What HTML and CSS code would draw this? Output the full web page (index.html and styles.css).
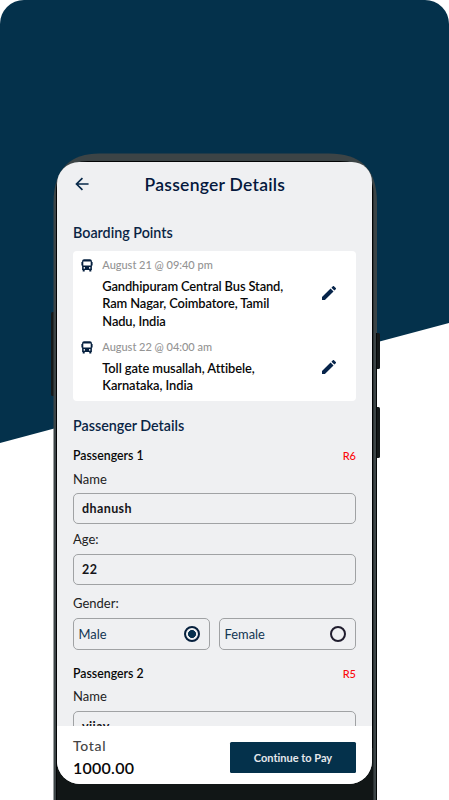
FILE: index.html
```html
<!DOCTYPE html>
<html lang="en">
<head>
<meta charset="utf-8">
<title>Passenger Details</title>
<link rel="stylesheet" href="styles.css">
</head>
<body>
<svg width="0" height="0" class="symbols" aria-hidden="true">
  <symbol id="bus" viewBox="0 0 12 13"><path fill="#06203f" fill-rule="evenodd" d="M3 .3H9Q10.700.300 10.900 2V3H11.600V6.500H10.900V11H10.300V12.500H8.300V11H3.700V12.500H1.700V11H1.100V6.500H.4V3H1.100V2Q1.300.3 3 .3ZM2.300 2.500V6.500H9.700V2.500ZM3.300 8.100A.8.8 0 1 0 3.300 9.700.8.8 0 1 0 3.300 8.100ZM8.700 8.100A.8.8 0 1 0 8.700 9.700.8.8 0 1 0 8.700 8.100Z"/></symbol>
  <symbol id="pencil" viewBox="3 3 18 18"><path fill="#06244a" d="M3 17.250V21h3.750L17.810 9.940l-3.750-3.750L3 17.250zM20.710 7.040a1 1 0 0 0 0-1.410l-2.340-2.340a1 1 0 0 0-1.410 0l-1.830 1.830 3.750 3.750 1.830-1.830z"/></symbol>
</svg>
<div class="poster">
  <svg class="backdrop" viewBox="0 0 449 800" aria-hidden="true"><path d="M0 24A24 24 0 0 1 24 0H425A24 24 0 0 1 449 24V323L0 443Z" fill="#04314b"/></svg>
  <i class="key key-left"></i><i class="key key-power"></i><i class="key key-volume"></i>
  <div class="phone">
    <svg class="shell" viewBox="0 0 324 647" aria-hidden="true">
      <path d="M-.5 647V50C-.5 14 18 .5 45 .5H275C305 .5 323 14 323 50V647Z" fill="#3c4446"/>
      <path d="M322.500 180V647" stroke="#050808"/>
      <path d="M2 647V38C2 20 16 8 34 8H286C306 8 319.300 20 319.300 39V647Z" fill="#020405"/>
      <path d="M3 595H319V647H3Z" fill="#111616"/>
    </svg>
    <main class="screen">
      <header class="topbar">
        <svg class="back" viewBox="0 0 16 16"><path d="M15.500 8H2M8.500 1.200 1.700 8 8.500 14.800" fill="none" stroke="#08294a" stroke-width="1.900"/></svg>
        <h1>Passenger Details</h1>
      </header>
      <div class="content">
        <h2>Boarding Points</h2>
        <section class="card">
          <div class="stop first">
            <svg class="bus"><use href="#bus"/></svg>
            <div class="where"><time>August 21 @ 09:40 pm</time><p>Gandhipuram Central Bus Stand,<br>Ram Nagar, Coimbatore, Tamil<br>Nadu, India</p></div>
            <svg class="edit"><use href="#pencil"/></svg>
          </div>
          <div class="stop">
            <svg class="bus"><use href="#bus"/></svg>
            <div class="where"><time>August 22 @ 04:00 am</time><p class="wide">Toll gate musallah, Attibele,<br>Karnataka, India</p></div>
            <svg class="edit"><use href="#pencil"/></svg>
          </div>
        </section>
        <h2 class="h-pass">Passenger Details</h2>
        <section class="passenger">
          <div class="who"><h3>Passengers 1</h3><span class="seat">R6</span></div>
          <div class="label">Name</div><div class="field">dhanush</div>
          <div class="label age">Age:</div><div class="field">22</div>
          <div class="label gender">Gender:</div>
          <div class="choices">
            <div class="choice">Male<i class="radio on"></i></div>
            <div class="choice">Female<i class="radio"></i></div>
          </div>
        </section>
        <section class="passenger">
          <div class="who"><h3>Passengers 2</h3><span class="seat">R5</span></div>
          <div class="label second">Name</div><div class="field">vijay</div>
        </section>
      </div>
      <footer class="paybar">
        <div><div class="total">Total</div><div class="amount">1000.00</div></div>
        <div class="pay">Continue to Pay</div>
      </footer>
    </main>
  </div>
</div>
</body>
</html>
```
FILE: styles.css
```css
* { box-sizing: border-box; }
body { margin: 0; background: #fff; font-family: Lato, "Liberation Sans", sans-serif; font-variant-ligatures: none; }
.symbols { position: absolute; }
.poster { position: relative; width: 449px; height: 800px; overflow: hidden; padding: 153px 0 0 54px; }
.backdrop { position: absolute; inset: 0; width: 449px; height: 800px; }
.key { position: absolute; width: 4px; background: #141819; border-radius: 1.500px; }
.key-left { left: 51px; top: 312px; height: 84px; }
.key-power { left: 375px; top: 333px; height: 36px; width: 4.500px; }
.key-volume { left: 375px; top: 407px; height: 51px; width: 4.500px; }
.phone { position: relative; width: 323px; height: 647px; padding: 9px 0 0 3px; }
.shell { position: absolute; left: 0; top: 0; width: 324px; height: 647px; overflow: visible; }
.screen { position: relative; width: 315px; height: 622px; display: flex; flex-direction: column; background: #eff0f2; border-radius: 22px 20px 23px 23px; overflow: hidden; }
h1, h2, h3, p { margin: 0; }
.topbar { display: flex; align-items: center; height: 45px; flex: none; padding-left: 18px; }
.back { width: 14px; height: 14px; margin-top: -1px; }
h1 { margin-left: 55.500px; font-size: 17.500px; line-height: 22px; font-weight: 600; color: #05183d; letter-spacing: .27px; white-space: nowrap; }
.content { flex: 1; min-height: 0; overflow: hidden; padding: 16px 16px 0; }
h2 { font-size: 14.300px; line-height: 20px; font-weight: 600; color: #0a2545; }
.card { height: 150px; margin-top: 8px; background: #fff; border-radius: 4px; padding: 7px 20px 0 8px; }
.stop { display: flex; align-items: flex-start; height: 68px; }
.stop.first { height: 82px; }
.bus { width: 12px; height: 13px; margin-top: 1px; flex: none; }
.where { flex: 1; margin-left: 9.300px; white-space: nowrap; }
time { display: block; font-size: 11px; line-height: 14px; font-weight: 500; color: #949494; letter-spacing: -.02px; }
p { margin-top: 5.500px; font-size: 12.900px; line-height: 17.500px; font-weight: 600; color: #080808; letter-spacing: -.13px; }
p.wide { letter-spacing: -.08px; }
.edit { width: 14px; height: 14px; margin-top: 28px; flex: none; }
.stop:not(.first) .edit { margin-top: 20px; }
.h-pass { margin-top: 15px; }
.passenger { height: 218px; padding-top: 10px; }
.who { display: flex; justify-content: space-between; align-items: center; height: 20px; }
h3 { font-size: 12.300px; line-height: 20px; font-weight: 600; color: #080808; }
.seat { font-size: 11px; line-height: 14px; color: #fb080b; font-weight: 500; }
.label { height: 27px; line-height: 26px; font-size: 13px; color: #222; }
.label.second { line-height: 25px; }
.field { height: 31px; border: 1px solid #a0a2a4; border-radius: 5px; padding-left: 8px; line-height: 29px; font-size: 12.500px; font-weight: 700; color: #151519; letter-spacing: .4px; }
.label.age { height: 30px; line-height: 30px; }
.label.gender { height: 33px; line-height: 36px; }
.choices { display: grid; grid-template-columns: 137px 137px; gap: 9px; }
.choice { display: flex; justify-content: space-between; align-items: center; height: 32px; border: 1px solid #a0a2a4; border-radius: 5px; padding: 0 9.500px 0 4.500px; font-size: 12.900px; color: #123653; }
.radio { width: 16px; height: 16px; border: 2px solid #201d2e; border-radius: 50%; }
.radio.on { border-color: #06203d; background: radial-gradient(circle, #06304f 0 3.700px, transparent 4.300px); }
.paybar { height: 58px; flex: none; background: #fff; display: flex; justify-content: space-between; align-items: flex-start; padding: 9px 16px 0; }
.total { font-size: 14px; line-height: 22px; font-weight: 500; color: #444; letter-spacing: .7px; }
.amount { font-size: 16px; line-height: 22px; font-weight: 600; color: #080808; letter-spacing: .25px; }
.pay { width: 126px; height: 31px; margin-top: 7px; border-radius: 1.500px; background: #04314b; color: #e6e8ec; text-align: center; line-height: 31px; font-size: 11px; font-weight: 700; }
```
